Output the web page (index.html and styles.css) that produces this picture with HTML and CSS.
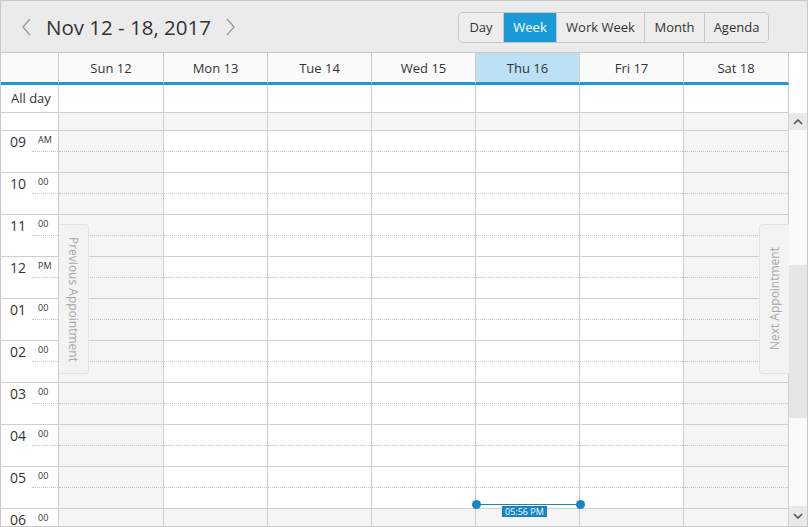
FILE: index.html
```html
<!DOCTYPE html>
<html lang="en">
<head>
    <meta charset="UTF-8">
    <meta name="viewport" content="width=device-width, initial-scale=1.0">
    <title>Scheduler - Week View</title>
    <link rel="stylesheet" href="styles.css">
</head>
<body>
    <div class="scheduler">
        <div class="toolbar">
            <div class="date-nav">
                <button class="nav-btn" title="Previous">
                    <svg width="12" height="18" viewBox="0 0 12 18"><polyline points="9,1 2,9 9,17" fill="none" stroke="#9a9a9a" stroke-width="1.4"/></svg>
                </button>
                <span class="date-range">Nov 12 - 18, 2017</span>
                <button class="nav-btn" title="Next">
                    <svg width="12" height="18" viewBox="0 0 12 18"><polyline points="3,1 10,9 3,17" fill="none" stroke="#9a9a9a" stroke-width="1.4"/></svg>
                </button>
            </div>
            <div class="views">
                <button class="view-btn btn-day">Day</button>
                <button class="view-btn btn-week active">Week</button>
                <button class="view-btn btn-workweek">Work Week</button>
                <button class="view-btn btn-month">Month</button>
                <button class="view-btn btn-agenda">Agenda</button>
            </div>
        </div>

        <div class="row day-head">
            <div class="corner"></div>
            <div class="day-name">Sun 12</div>
            <div class="day-name">Mon 13</div>
            <div class="day-name">Tue 14</div>
            <div class="day-name">Wed 15</div>
            <div class="day-name today">Thu 16</div>
            <div class="day-name">Fri 17</div>
            <div class="day-name last">Sat 18</div>
            <div class="gutter"></div>
        </div>

        <div class="row allday">
            <div class="allday-label">All day</div>
            <div class="allday-cell"></div>
            <div class="allday-cell"></div>
            <div class="allday-cell"></div>
            <div class="allday-cell"></div>
            <div class="allday-cell"></div>
            <div class="allday-cell"></div>
            <div class="allday-cell last"></div>
            <div class="gutter"></div>
        </div>

        <div class="row content">
            <div class="time-col" id="time-col"></div>
            <div class="day-col weekend"></div>
            <div class="day-col"></div>
            <div class="day-col"></div>
            <div class="day-col"></div>
            <div class="day-col"></div>
            <div class="day-col"></div>
            <div class="day-col weekend last"></div>
            <div class="scrollbar">
                <div class="scroll-arrow">
                    <svg width="10" height="6" viewBox="0 0 10 6"><polyline points="1,5 5,1 9,5" fill="none" stroke="#555" stroke-width="1.6"/></svg>
                </div>
                <div class="scroll-track">
                    <div class="scroll-thumb"></div>
                </div>
                <div class="scroll-arrow">
                    <svg width="10" height="6" viewBox="0 0 10 6"><polyline points="1,1 5,5 9,1" fill="none" stroke="#555" stroke-width="1.6"/></svg>
                </div>
            </div>

            <div class="appt-tab prev-tab"><span>Previous Appointment</span></div>
            <div class="appt-tab next-tab"><span>Next Appointment</span></div>

            <div class="now-line">
                <span class="now-dot left"></span>
                <span class="now-dot right"></span>
                <span class="now-label">05:56 PM</span>
            </div>
        </div>
    </div>

    <script>
        const hours = [
            ['09', 'AM'], ['10', '00'], ['11', '00'], ['12', 'PM'], ['01', '00'],
            ['02', '00'], ['03', '00'], ['04', '00'], ['05', '00'], ['06', '00']
        ];

        // time labels
        const timeCol = document.getElementById('time-col');
        timeCol.innerHTML = '<div class="top-strip"></div>' + hours.map(h =>
            `<div class="hour"><span class="hh">${h[0]}</span><span class="mm">${h[1]}</span><div class="half"></div></div>`
        ).join('');

        // day slots, the 6 PM row is outside work hours
        document.querySelectorAll('.day-col').forEach(col => {
            let html = '<div class="top-strip off"></div>';
            hours.forEach((h, i) => {
                const off = i === hours.length - 1 ? ' off' : '';
                html += `<div class="hour${off}"><div class="half"></div></div>`;
            });
            col.innerHTML = html;
        });
    </script>
</body>
</html>
```

FILE: styles.css
```css
* {
    margin: 0;
    padding: 0;
    box-sizing: border-box;
}

body {
    font-family: "Open Sans", "Noto Sans", sans-serif;
    color: #333;
    background-color: #fff;
}

.scheduler {
    width: 808px;
    height: 527px;
    border: 1px solid #c8c8c8;
    overflow: hidden;
}

/* Toolbar */
.toolbar {
    height: 52px;
    background-color: #ebebeb;
    border-bottom: 1px solid #c8c8c8;
    display: flex;
    align-items: center;
    justify-content: space-between;
    padding: 0 38px 0 19px;
}

.date-nav {
    display: flex;
    align-items: center;
}

.nav-btn {
    background: none;
    border: none;
    width: 14px;
    height: 20px;
    display: flex;
    align-items: center;
    justify-content: center;
    cursor: pointer;
}

.date-range {
    font-size: 20.5px;
    color: #333;
    margin: 0 12px 0 12px;
}

.views {
    display: flex;
    height: 31px;
    border: 1px solid #c6c6c6;
    border-radius: 5px;
    overflow: hidden;
    margin-top: 1px;
}

.view-btn {
    font-family: inherit;
    font-size: 13px;
    color: #333;
    background-color: #ededed;
    border: none;
    border-left: 1px solid #c6c6c6;
    cursor: pointer;
    text-align: center;
}

.view-btn:first-child {
    border-left: none;
}

.btn-day { width: 44px; }
.btn-week { width: 53px; }
.btn-workweek { width: 88px; }
.btn-month { width: 60px; }
.btn-agenda { width: 64px; }

.view-btn.active {
    background-color: #1a9bd7;
    color: #fff;
}

/* Shared column layout */
.row {
    display: grid;
    grid-template-columns: 57px 105px repeat(5, 104px) 106px 18px;
}

.day-head {
    height: 32px;
}

.corner,
.day-name {
    border-bottom: 3px solid #1a9bd7;
    background-color: #fbfbfb;
}

.day-name {
    border-left: 1px solid #cfcfcf;
    font-size: 13px;
    display: flex;
    align-items: center;
    justify-content: center;
    padding-top: 1px;
}

.day-name.today {
    background-color: #bce0f4;
}

.last {
    border-right: 1px solid #cfcfcf;
}

.gutter {
    background-color: #fff;
}

.allday {
    height: 28px;
}

.allday-label,
.allday-cell {
    border-bottom: 1px solid #cfcfcf;
}

.allday-label {
    font-size: 13px;
    padding: 4px 0 0 10px;
}

.allday-cell {
    border-left: 1px solid #cfcfcf;
}

/* Time grid */
.content {
    height: 413px;
    overflow: hidden;
    position: relative;
}

.time-col,
.day-col {
    overflow: hidden;
}

.day-col {
    border-left: 1px solid #cfcfcf;
}

.day-col.last {
    border-right: 1px solid #cfcfcf;
}

.top-strip {
    height: 17px;
}

.hour {
    height: 42px;
    border-top: 1px solid #cfcfcf;
    position: relative;
}

.half {
    height: 21px;
    border-bottom: 1px dotted #c4c4c4;
}

.time-col .half {
    margin-left: 31px;
}

.hh {
    position: absolute;
    left: 9px;
    top: 1px;
    font-size: 14px;
}

.mm {
    position: absolute;
    left: 37px;
    top: 2px;
    font-size: 9px;
}

.off,
.weekend .hour {
    background-color: #f5f5f5;
}

.weekend .top-strip {
    background-color: #f5f5f5;
}

/* Scrollbar */
.scrollbar {
    display: flex;
    flex-direction: column;
    background-color: #fafafa;
}

.scroll-arrow {
    height: 17px;
    background-color: #e9e9e9;
    display: flex;
    align-items: center;
    justify-content: center;
}

.scroll-arrow:last-child {
    height: 20px;
}

.scroll-track {
    flex: 1;
    padding-top: 135px;
}

.scroll-thumb {
    height: 153px;
    background-color: #e6e6e6;
}

/* Previous / next appointment tabs */
.appt-tab {
    position: absolute;
    top: 111px;
    width: 30px;
    height: 150px;
    background-color: #f3f3f3;
    border: 1px solid #e3e3e3;
    display: flex;
    align-items: center;
    justify-content: center;
    font-size: 12px;
    color: #a8a8a8;
}

.appt-tab span {
    writing-mode: vertical-rl;
    white-space: nowrap;
}

.prev-tab {
    left: 58px;
    border-left: none;
    border-radius: 0 4px 4px 0;
}

.next-tab {
    left: 758px;
    border-right: none;
    border-radius: 4px 0 0 4px;
}

.next-tab span {
    transform: rotate(180deg);
}

/* Current time marker */
.now-line {
    position: absolute;
    left: 475px;
    top: 391px;
    width: 105px;
    height: 1px;
    background-color: #1a84c2;
}

.now-dot {
    position: absolute;
    top: -4px;
    width: 9px;
    height: 9px;
    border-radius: 50%;
    background-color: #1a84c2;
}

.now-dot.left { left: -4px; }
.now-dot.right { right: -4px; }

.now-label {
    position: absolute;
    left: 26px;
    top: 2px;
    background-color: #1a84c2;
    color: #fff;
    font-size: 9px;
    line-height: 11px;
    padding: 0 3px;
}
```
